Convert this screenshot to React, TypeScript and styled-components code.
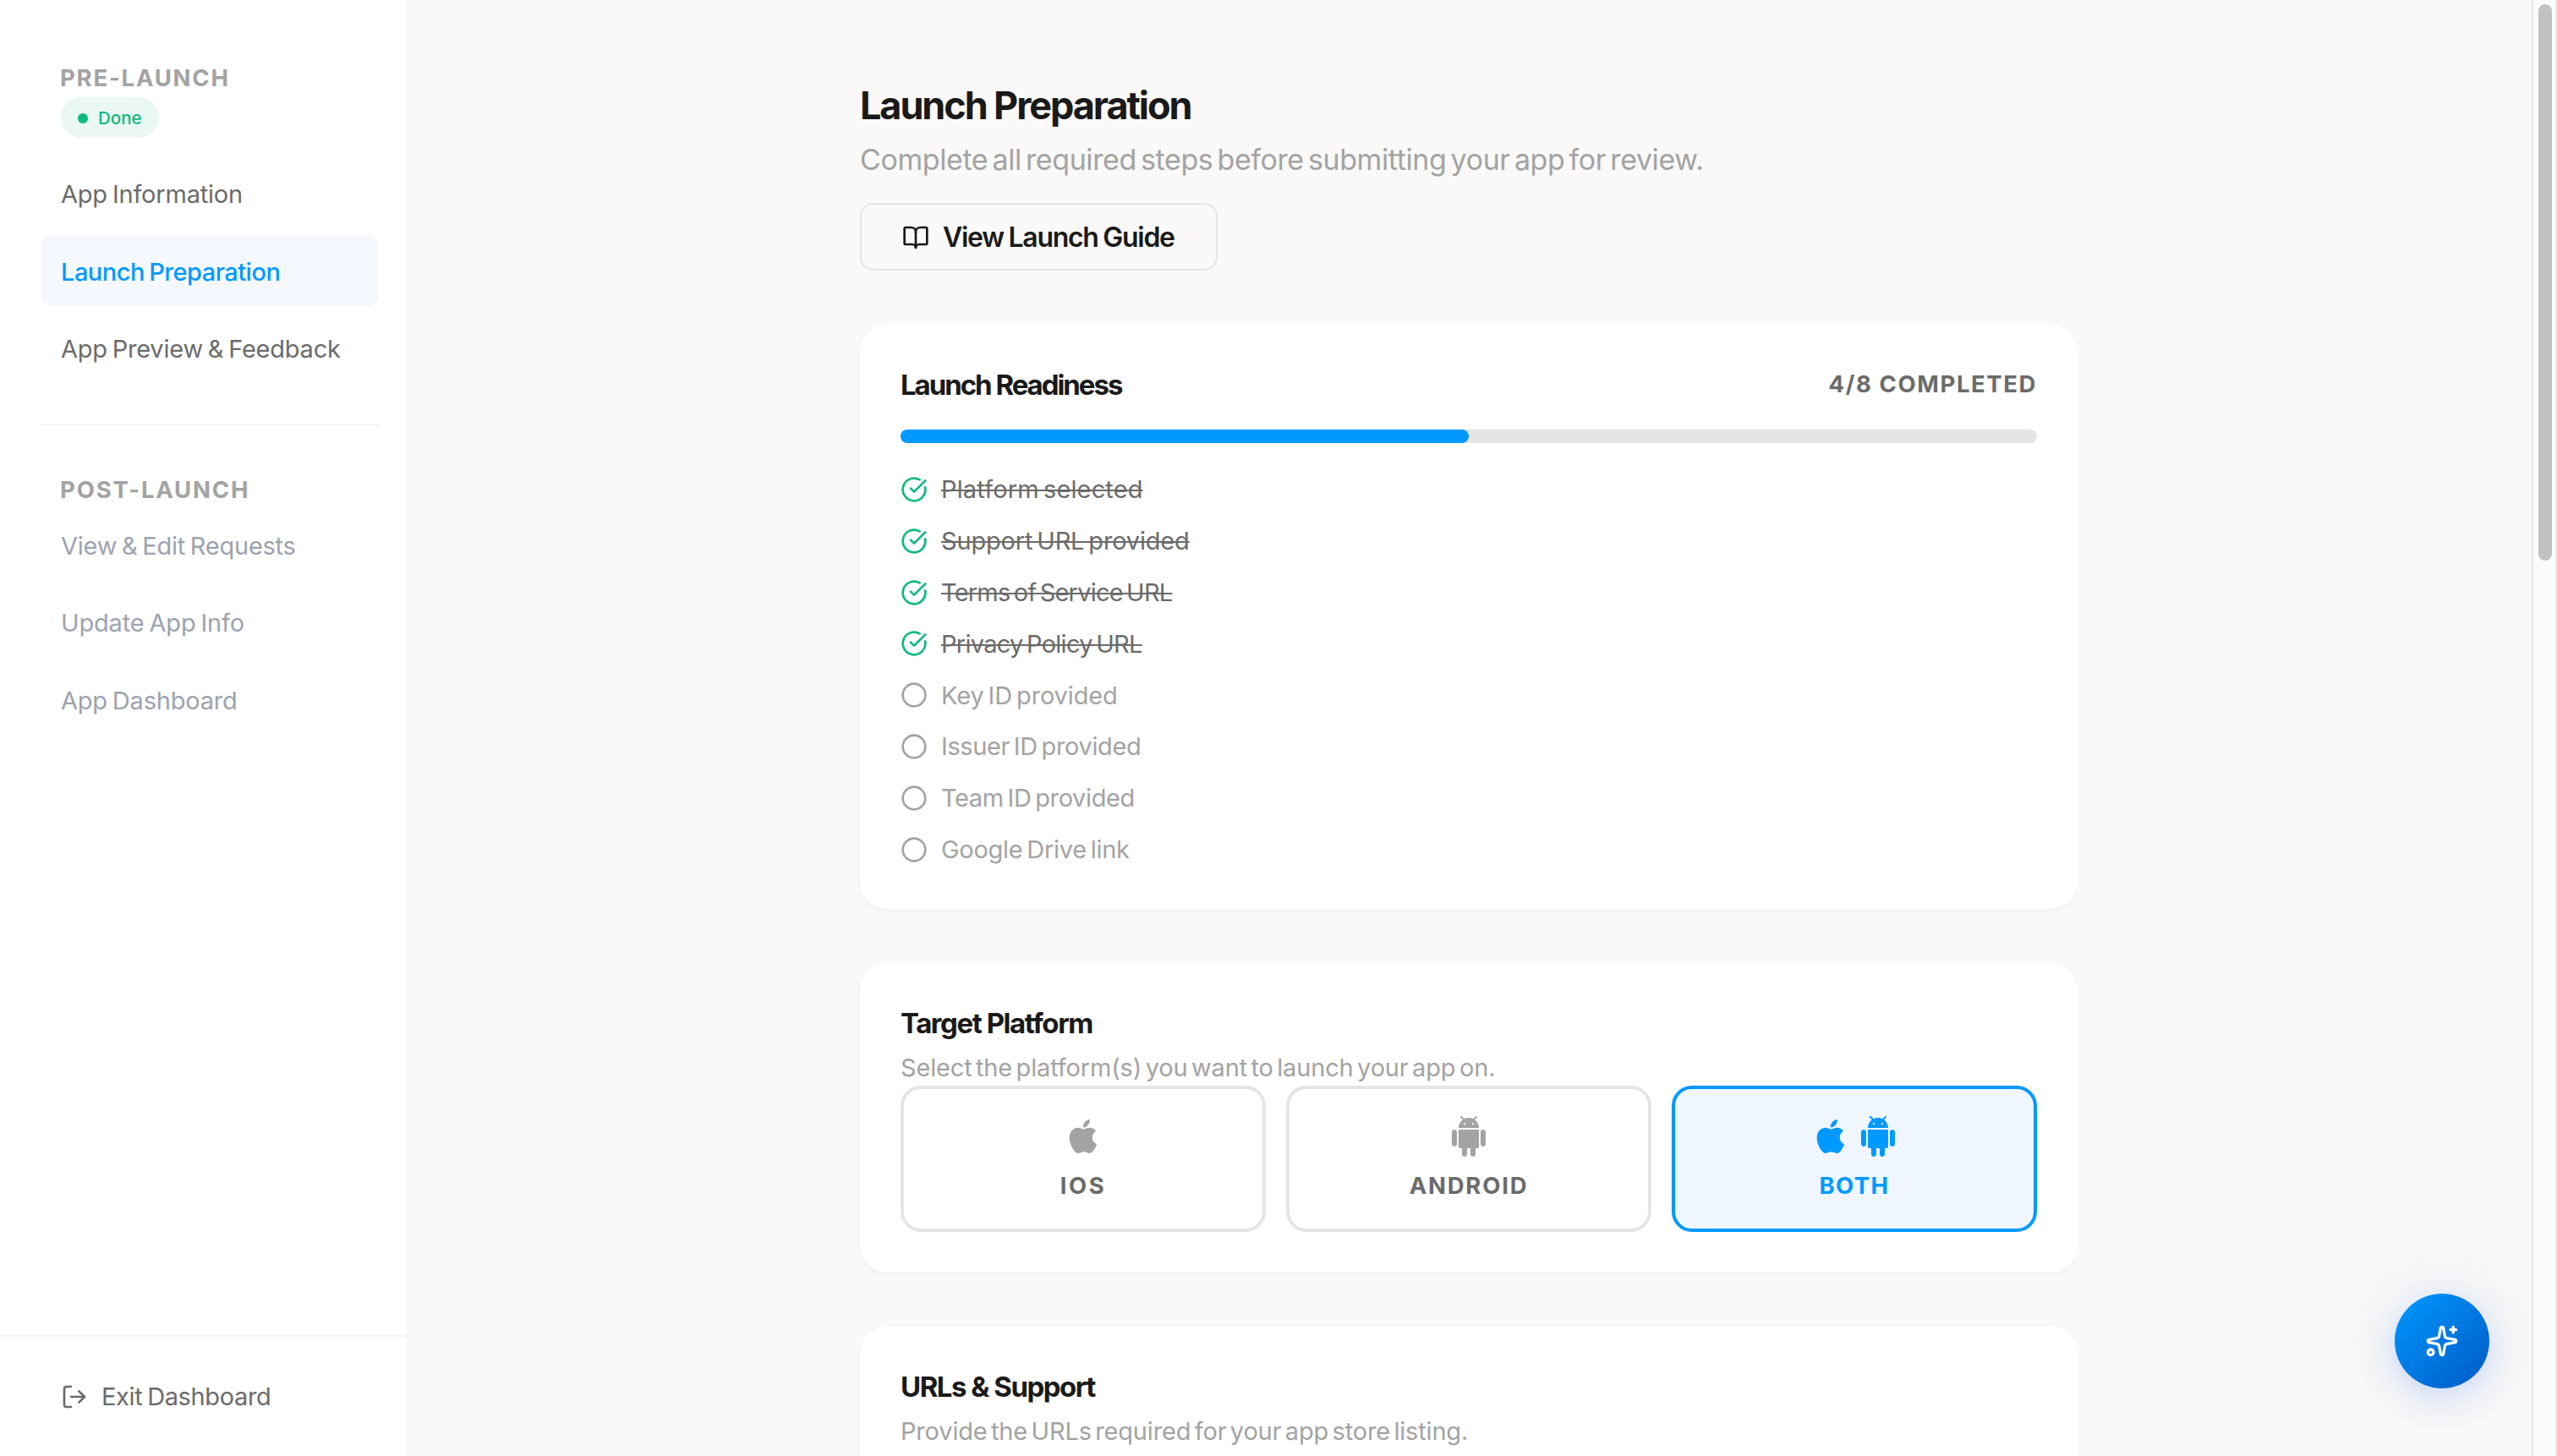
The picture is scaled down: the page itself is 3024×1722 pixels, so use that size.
import React from "react";
import styled, { createGlobalStyle } from "styled-components";
import { BookOpen, Circle, CircleCheckBig, LogOut, Sparkles } from "lucide-react";

const color = {
  ink: "#1a1a1a",
  body: "#6b6b6b",
  muted: "#a3a3a3",
  disabled: "#9ca3af",
  accent: "#0099ff",
  success: "#10b981",
  line: "#e5e5e5",
  hairline: "#f3f3f3",
  page: "#faf9f7",
};

const GlobalStyle = createGlobalStyle`
  *, *::before, *::after { box-sizing: border-box; }
  body {
    margin: 0;
    overflow: hidden;
    font-family: Inter, "Liberation Sans", sans-serif;
    background: ${color.page};
    color: ${color.ink};
  }
`;

interface TextProps {
  $track?: number;
}

const Shell = styled.div`
  display: flex;
  height: 1722px;
  overflow: hidden;
`;

/* Sidebar */

const Sidebar = styled.aside`
  display: flex;
  flex-direction: column;
  flex: none;
  width: 480px;
  background: #fff;
`;

const SidebarBody = styled.div`
  flex: 1;
  padding: 69px 32px 0 48px;
`;

const GroupTitle = styled.h2<TextProps>`
  margin: 0;
  padding-left: 23px;
  font-size: 27.5px;
  line-height: 46px;
  font-weight: 700;
  letter-spacing: ${(p) => p.$track ?? 0}px;
  color: ${color.muted};
`;

const Badge = styled.span`
  display: flex;
  align-items: center;
  gap: 12px;
  width: 116px;
  height: 48px;
  margin-left: 24px;
  padding: 1px 0 0 20px;
  border-radius: 24px;
  background: #eaf7f2;
  color: ${color.success};
  font-size: 20.5px;
  font-weight: 450;
  letter-spacing: 0;
`;

const Dot = styled.i`
  width: 12px;
  height: 12px;
  border-radius: 50%;
  background: ${color.success};
`;

const Nav = styled.nav<{ $gap?: number }>`
  display: flex;
  flex-direction: column;
  gap: 8px;
  margin-top: ${(p) => p.$gap ?? 0}px;
`;

const NavItem = styled.a<TextProps & { $active?: boolean; $disabled?: boolean }>`
  display: flex;
  align-items: center;
  height: 83.5px;
  padding: 3px 24px 0;
  border-radius: 12px;
  font-size: 29px;
  font-weight: ${(p) => (p.$active ? 500 : 400)};
  letter-spacing: ${(p) => p.$track ?? 0}px;
  word-spacing: -2px;
  white-space: nowrap;
  color: ${(p) => (p.$active ? color.accent : p.$disabled ? color.disabled : color.body)};
  background: ${(p) => (p.$active ? "#f5f9ff" : "transparent")};
`;

const Divider = styled.hr`
  height: 2px;
  margin: 48px 0 53px;
  border: 0;
  background: ${color.hairline};
`;

const SidebarFooter = styled.footer`
  display: flex;
  align-items: center;
  gap: 16px;
  height: 143px;
  padding-left: 72px;
  border-top: 2px solid ${color.hairline};
  font-size: 29px;
  letter-spacing: -0.36px;
  word-spacing: -2px;
  color: ${color.body};
`;

/* Main column */

const Main = styled.main`
  flex: 1;
  display: flex;
  flex-direction: column;
  align-items: center;
  padding-top: 95px;
  overflow: hidden;
`;

const Column = styled.div`
  display: flex;
  flex-direction: column;
  gap: 64px;
  width: 1440px;
`;

const Header = styled.header`
  display: flex;
  flex-direction: column;
  align-items: flex-start;
  height: 225px;
`;

const PageTitle = styled.h1`
  margin: 0;
  font-size: 45px;
  line-height: 60px;
  font-weight: 700;
  letter-spacing: -2.09px;
`;

const PageSubtitle = styled.p`
  margin: 9px 0 26px;
  font-size: 34px;
  line-height: 50px;
  letter-spacing: -0.4px;
  word-spacing: -4px;
  white-space: nowrap;
  color: ${color.muted};
`;

const GuideButton = styled.button`
  display: flex;
  align-items: center;
  gap: 16px;
  width: 423px;
  height: 80px;
  padding: 1px 0 0 48px;
  border: 2px solid ${color.line};
  border-radius: 16px;
  background: transparent;
  font: 600 32px Inter, sans-serif;
  letter-spacing: -1.3px;
  word-spacing: -1px;
  white-space: nowrap;
  color: ${color.ink};
`;

const Card = styled.section`
  padding: 48px;
  border-radius: 32px;
  background: #fff;
  box-shadow: 0 2px 4px rgba(0, 0, 0, 0.04);
`;

const CardHead = styled.div`
  display: flex;
  justify-content: space-between;
  align-items: center;
`;

const CardTitle = styled.h3<TextProps>`
  margin: 0;
  font-size: 33px;
  line-height: 46px;
  font-weight: 700;
  letter-spacing: ${(p) => p.$track ?? 0}px;
`;

const CardText = styled.p<TextProps>`
  margin: 9px 0 0;
  font-size: 29px;
  line-height: 42px;
  letter-spacing: ${(p) => p.$track ?? 0}px;
  word-spacing: -3.5px;
  color: ${color.muted};
`;

const Count = styled.span`
  padding-bottom: 2px;
  font-size: 27.5px;
  font-weight: 700;
  line-height: 44px;
  letter-spacing: 1.586px;
  color: ${color.body};
`;

const Track = styled.div`
  height: 16px;
  margin-top: 30px;
  border-radius: 8px;
  background: ${color.line};
`;

const Fill = styled.div`
  height: 100%;
  border-radius: 8px;
  background: ${color.accent};
`;

const Checklist = styled.ul`
  display: flex;
  flex-direction: column;
  gap: 16px;
  margin: 32.6px 0 0;
  padding: 0;
  list-style: none;
`;

const CheckRow = styled.li<{ $done: boolean }>`
  display: flex;
  align-items: center;
  gap: 16px;
  height: 44.8px;
  color: ${(p) => (p.$done ? color.success : color.muted)};
`;

const CheckLabel = styled.span<TextProps & { $done: boolean }>`
  font-size: 29px;
  letter-spacing: ${(p) => p.$track ?? 0}px;
  word-spacing: -3px;
  color: ${(p) => (p.$done ? color.body : color.muted)};
  text-decoration: ${(p) => (p.$done ? "line-through" : "none")};
  text-decoration-thickness: 2px;
`;

const Options = styled.div`
  display: grid;
  grid-template-columns: repeat(3, 1fr);
  gap: 24px;
`;

const Option = styled.div<{ $selected?: boolean }>`
  display: flex;
  flex-direction: column;
  align-items: center;
  height: 173px;
  padding-top: 32px;
  border: 4px solid ${(p) => (p.$selected ? color.accent : color.line)};
  border-radius: 24px;
  background: ${(p) => (p.$selected ? "#eff6ff" : "transparent")};
  color: ${(p) => (p.$selected ? color.accent : color.muted)};
`;

const OptionIcons = styled.div`
  display: flex;
  gap: 8px;
  height: 48px;
`;

const OptionLabel = styled.span<TextProps & { $selected?: boolean }>`
  margin-top: 12px;
  font-size: 27.5px;
  line-height: 44px;
  font-weight: 700;
  letter-spacing: ${(p) => p.$track ?? 0}px;
  color: ${(p) => (p.$selected ? color.accent : color.body)};
`;

/* Scrollbar and floating button */

const ScrollGutter = styled.div`
  flex: none;
  width: 30px;
  padding: 5px 0 0 6px;
  border-left: 2px solid #e5e5e5;
  border-right: 2px solid #e9e9e9;
  background: #fbfbfb;
`;

const Thumb = styled.div`
  width: 16px;
  height: 658px;
  border-radius: 8px;
  background: #c1c1c1;
`;

const Assistant = styled.button`
  position: fixed;
  right: 80px;
  bottom: 80px;
  display: flex;
  align-items: center;
  justify-content: center;
  width: 112px;
  height: 112px;
  padding: 0;
  border: 0;
  border-radius: 50%;
  color: #fff;
  background: linear-gradient(135deg, #0099ff 0%, #0059c4 100%);
  box-shadow:
    0 8px 40px rgba(40, 100, 255, 0.23),
    0 0 6px 48px rgba(243, 244, 246, 0.65);
`;

const AppleIcon = () => (
  <svg width="48" height="48" viewBox="0 0 24 24" fill="currentColor">
    <path d="M18.71 19.5c-.83 1.24-1.71 2.45-3.05 2.47-1.34.03-1.77-.79-3.29-.79-1.53 0-2 .77-3.27.82-1.31.05-2.3-1.32-3.14-2.53C4.25 17 2.94 12.45 4.7 9.39c.87-1.52 2.43-2.48 4.12-2.51 1.28-.02 2.5.87 3.29.87.78 0 2.26-1.07 3.81-.91.65.03 2.47.26 3.64 1.98-.09.06-2.17 1.28-2.15 3.81.03 3.02 2.65 4.03 2.68 4.04-.03.07-.42 1.44-1.38 2.83M13 3.5c.73-.83 1.94-1.46 2.94-1.5.13 1.17-.34 2.35-1.04 3.19-.69.85-1.83 1.51-2.95 1.42-.15-1.15.41-2.35 1.05-3.11z" />
  </svg>
);

const AndroidIcon = () => (
  <svg width="48" height="48" viewBox="0 0 24 24" fill="currentColor">
    <path d="M6 18c0 .55.45 1 1 1h1v3.5c0 .83.67 1.5 1.5 1.5s1.5-.67 1.5-1.5V19h2v3.5c0 .83.67 1.5 1.5 1.5s1.5-.67 1.5-1.5V19h1c.55 0 1-.45 1-1V8H6v10zM3.5 8C2.67 8 2 8.67 2 9.5v7c0 .83.67 1.5 1.5 1.5S5 17.33 5 16.5v-7C5 8.67 4.33 8 3.5 8zm17 0c-.83 0-1.5.67-1.5 1.5v7c0 .83.67 1.5 1.5 1.5s1.5-.67 1.5-1.5v-7c0-.83-.67-1.5-1.5-1.5zm-4.97-5.84l1.3-1.3c.2-.2.2-.51 0-.71-.2-.2-.51-.2-.71 0l-1.48 1.48C13.85 1.23 12.95 1 12 1c-.96 0-1.86.23-2.66.63L7.85.15c-.2-.2-.51-.2-.71 0-.2.2-.2.51 0 .71l1.31 1.31C6.97 3.26 6 5.01 6 7h12c0-1.99-.97-3.75-2.47-4.84zM10 5H9V4h1v1zm5 0h-1V4h1v1z" />
  </svg>
);

const steps = [
  { label: "Platform selected", done: true, track: 0.13 },
  { label: "Support URL provided", done: true, track: -0.18 },
  { label: "Terms of Service URL", done: true, track: -0.8 },
  { label: "Privacy Policy URL", done: true, track: -0.725 },
  { label: "Key ID provided", done: false, track: -0.14 },
  { label: "Issuer ID provided", done: false, track: -0.38 },
  { label: "Team ID provided", done: false, track: -0.39 },
  { label: "Google Drive link", done: false, track: -0.28 },
];

export default function App() {
  const completed = steps.filter((s) => s.done).length;
  return (
    <Shell>
      <GlobalStyle />
      <Sidebar>
        <SidebarBody>
          <GroupTitle $track={1.786}>PRE-LAUNCH</GroupTitle>
          <Badge>
            <Dot />
            Done
          </Badge>
          <Nav $gap={23.5}>
            <NavItem $track={-0.2}>App Information</NavItem>
            <NavItem $active $track={-0.5}>Launch Preparation</NavItem>
            <NavItem $track={-0.23}>App Preview &amp; Feedback</NavItem>
          </Nav>
          <Divider />
          <GroupTitle $track={1.823}>POST-LAUNCH</GroupTitle>
          <Nav>
            <NavItem $disabled $track={-0.26}>View &amp; Edit Requests</NavItem>
            <NavItem $disabled $track={-0.17}>Update App Info</NavItem>
            <NavItem $disabled $track={-0.21}>App Dashboard</NavItem>
          </Nav>
        </SidebarBody>
        <SidebarFooter>
          <LogOut size={32} />
          Exit Dashboard
        </SidebarFooter>
      </Sidebar>

      <Main>
        <Column>
          <Header>
            <PageTitle>Launch Preparation</PageTitle>
            <PageSubtitle>Complete all required steps before submitting your app for review.</PageSubtitle>
            <GuideButton>
              <BookOpen size={32} />
              View Launch Guide
            </GuideButton>
          </Header>

          <Card>
            <CardHead>
              <CardTitle $track={-2.04}>Launch Readiness</CardTitle>
              <Count>{`${completed}/${steps.length} COMPLETED`}</Count>
            </CardHead>
            <Track>
              <Fill style={{ width: `${(completed / steps.length) * 100}%` }} />
            </Track>
            <Checklist>
              {steps.map((s) => (
                <CheckRow key={s.label} $done={s.done}>
                  {s.done ? <CircleCheckBig size={32} /> : <Circle size={32} />}
                  <CheckLabel $done={s.done} $track={s.track}>{s.label}</CheckLabel>
                </CheckRow>
              ))}
            </Checklist>
          </Card>

          <Card>
            <CardTitle $track={-1.45}>Target Platform</CardTitle>
            <CardText $track={-0.16}>Select the platform(s) you want to launch your app on.</CardText>
            <Options>
              <Option>
                <OptionIcons><AppleIcon /></OptionIcons>
                <OptionLabel $track={2.6}>IOS</OptionLabel>
              </Option>
              <Option>
                <OptionIcons><AndroidIcon /></OptionIcons>
                <OptionLabel $track={1.78}>ANDROID</OptionLabel>
              </Option>
              <Option $selected>
                <OptionIcons>
                  <AppleIcon />
                  <AndroidIcon />
                </OptionIcons>
                <OptionLabel $selected $track={1.378}>BOTH</OptionLabel>
              </Option>
            </Options>
          </Card>

          <Card>
            <CardTitle $track={-1.5}>URLs &amp; Support</CardTitle>
            <CardText $track={-0.175}>Provide the URLs required for your app store listing.</CardText>
          </Card>
        </Column>
      </Main>

      <ScrollGutter>
        <Thumb />
      </ScrollGutter>
      <Assistant>
        <Sparkles size={40} />
      </Assistant>
    </Shell>
  );
}
